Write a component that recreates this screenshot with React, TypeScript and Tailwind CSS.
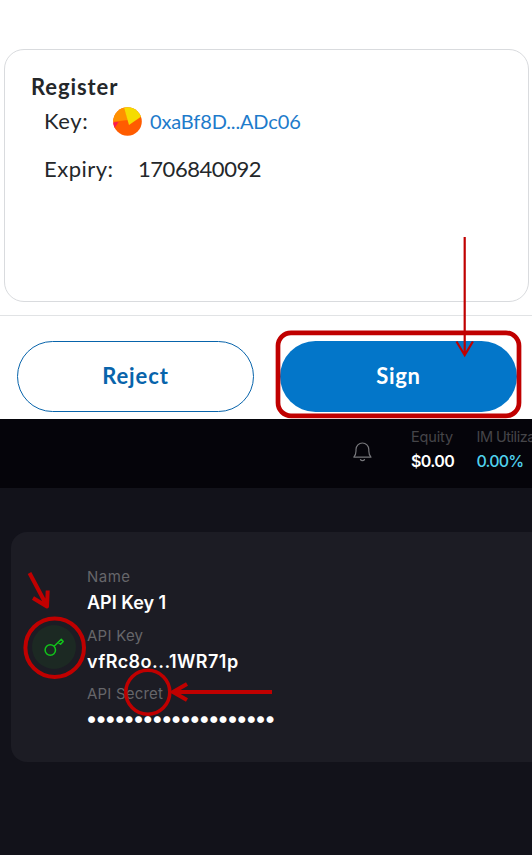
import React from "react";

function SignaturePanel() {
  return (
    <section className="flex h-[419px] flex-col bg-white pt-[49px] font-['Lato',sans-serif] text-[#24272a]">
      <div className="ml-1 mr-[3px] h-[253px] rounded-[20px] border border-[#d9dbde] pl-[26px] pt-[25px]">
        <h1 className="h-6 whitespace-nowrap text-[22px] font-bold leading-6 tracking-[0.9px]">Register</h1>
        <div className="ml-[13px] flex h-[46px] items-center">
          <span className="w-[69px] pb-[3px] text-[22px] tracking-[0.6px]">Key:</span>
          <svg className="mb-[2px] h-[29px] w-[29px]" viewBox="0 0 29 29">
            <clipPath id="avatar"><circle cx="14.5" cy="14.5" r="14.3" /></clipPath>
            <g clipPath="url(#avatar)">
              <path fill="#ff5c00" d="M0 0h29v29H0z" />
              <path fill="#ff9100" d="M-1 14.8 15 13 10-2H-1z" />
              <path fill="#f5dc00" d="M10.5-1 16 18 31 7.5V-1z" />
              <path fill="#fb1850" d="M0 15.5 5.5 15 1.5 21 0 21z" />
            </g>
          </svg>
          <span className="ml-[8px] whitespace-nowrap pb-[3px] text-[20px] tracking-[-0.15px] text-[#1d7bcb]">0xaBf8D...ADc06</span>
        </div>
        <div className="ml-[13px] flex h-[46px] items-center text-[22px]">
          <span className="w-[94px] tracking-[0.5px]">Expiry:</span>
          <span className="tracking-[-0.45px]">1706840092</span>
        </div>
      </div>
      <div className="mt-[13px] flex flex-1 gap-[26px] border-t border-[#e1e3e5] pl-[17px] pt-[25px] text-[22px] font-bold">
        <button className="h-[71px] w-[237px] rounded-full border border-[#0864ab] pb-[3px] text-[#0864ab] tracking-[0.9px]">Reject</button>
        <button className="h-[71px] w-[237px] rounded-full bg-[#0376c9] pb-[3px] text-white tracking-[0.7px]">Sign</button>
      </div>
    </section>
  );
}

function AccountBar() {
  return (
    <header className="flex h-[69px] overflow-hidden bg-[#05040a] pl-[353px]">
      <svg className="mt-[22px] h-[22px] w-[19px] shrink-0" viewBox="0 0 19 22" fill="none" stroke="#77777b" strokeWidth="1.2" strokeLinecap="round" strokeLinejoin="round">
        <path d="M.8 16.1c1.5-1.4 2.2-3.2 2.2-6V8.4a6.4 6.4 0 0 1 12.8 0v1.7c0 2.8.7 4.6 2.2 6z" />
        <path d="M7.5 18.6c.8 1.3 3.2 1.3 4 0" />
      </svg>
      <div className="ml-[39px] w-[65.5px] shrink-0 pt-2">
        <div className="h-5 text-[14.5px] leading-5 text-[#454549] tracking-[-0.15px]">Equity</div>
        <div className="h-7 text-[16px] font-semibold leading-7 text-white tracking-[-0.6px]">$0.00</div>
      </div>
      <div className="shrink-0 whitespace-nowrap pt-2">
        <div className="h-5 text-[14.5px] leading-5 text-[#454549] tracking-[-0.5px]">IM Utilization</div>
        <div className="h-7 text-[16px] font-medium leading-7 text-[#50d2ee] tracking-[-0.8px]">0.00%</div>
      </div>
    </header>
  );
}

function ApiKeyCard() {
  return (
    <div className="ml-[11px] mt-[44px] flex h-[230px] rounded-l-[16px] bg-[#1c1c24] pl-[21px]">
      <div className="mt-[93px] flex h-[44px] w-[44px] items-center justify-center rounded-full bg-[#1c2923]">
        <svg className="h-[20px] w-[22px]" viewBox="0 0 22 20" fill="none" stroke="#12c41b" strokeWidth="1.5" strokeLinejoin="round">
          <circle cx="7.3" cy="13" r="5.2" />
          <path d="M11.1 9.2 18.3 2.3 20.2 4.5 17.6 7.1 15.2 5.3" />
        </svg>
      </div>
      <div className="ml-[11px] whitespace-nowrap pt-[34px] text-white">
        <div className="h-[21px] text-[15px] leading-[21px] text-[#66666a] tracking-[0.5px]">Name</div>
        <div className="h-[31px] text-[18px] font-semibold leading-[31px]">API Key 1</div>
        <div className="mt-[7px] h-[21px] text-[15px] leading-[21px] text-[#66666a] tracking-[0.25px]">API Key</div>
        <div className="h-[31px] text-[18px] font-semibold leading-[31px] tracking-[0.45px]">vfRc8o...1WR71p</div>
        <div className="mt-[6px] h-[21px] text-[15px] leading-[21px] text-[#66666a] tracking-[0.2px]">API Secret</div>
        <div className="-ml-[1px] h-[28px] text-[22px] font-semibold leading-[28px] tracking-[-1.68px]">••••••••••••••••••••</div>
      </div>
    </div>
  );
}

function Annotations() {
  return (
    <svg className="pointer-events-none absolute left-0 top-0 h-[855px] w-[532px]" viewBox="0 0 532 855" fill="none" stroke="#c00000">
      <rect x="278" y="332.8" width="241" height="83" rx="13" strokeWidth="4.7" />
      <path d="M464.7 237v118M456.5 341.5l8.2 13.7 8.2-13.7" strokeWidth="2.2" />
      <circle cx="54.7" cy="647.7" r="29.3" strokeWidth="4" />
      <path d="m29.5 573 17.5 33M33 598l14 8.5.7-16" strokeWidth="4" strokeLinejoin="round" />
      <circle cx="147.8" cy="692.3" r="22" strokeWidth="3.5" />
      <path d="M272 692H173M187 684l-14 8 14 8" strokeWidth="4" />
    </svg>
  );
}

export default function App() {
  return (
    <main className="relative h-[855px] w-[532px] overflow-hidden bg-[#12121a] font-['Inter',sans-serif]">
      <SignaturePanel />
      <AccountBar />
      <ApiKeyCard />
      <Annotations />
    </main>
  );
}
